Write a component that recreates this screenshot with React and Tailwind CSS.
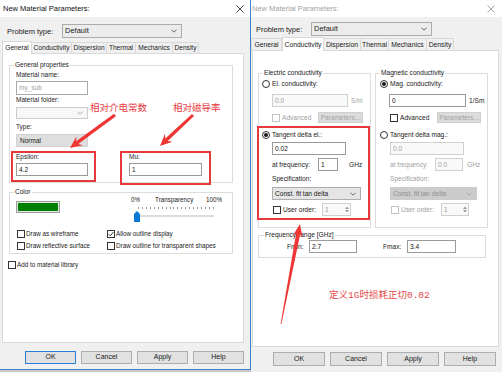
import React from "react";

const RED = "#e5393c";

function arrowPoints(tx, ty, px, py, w0, w1, headLen, headW) {
  const dx = px - tx, dy = py - ty;
  const L = Math.hypot(dx, dy);
  const ux = dx / L, uy = dy / L;
  const nx = -uy, ny = ux;
  const bx = px - ux * headLen, by = py - uy * headLen;
  const bx2 = px - ux * (headLen - 3), by2 = py - uy * (headLen - 3);
  const pts = [
    [tx + (nx * w0) / 2, ty + (ny * w0) / 2],
    [bx2 + (nx * w1) / 2, by2 + (ny * w1) / 2],
    [bx + (nx * headW) / 2, by + (ny * headW) / 2],
    [px, py],
    [bx - (nx * headW) / 2, by - (ny * headW) / 2],
    [bx2 - (nx * w1) / 2, by2 - (ny * w1) / 2],
    [tx - (nx * w0) / 2, ty - (ny * w0) / 2],
  ];
  return pts.map((p) => p.map((v) => v.toFixed(1)).join(",")).join(" ");
}

const CloseX = ({ color }) => (
  <svg width="8" height="8" viewBox="0 0 8 8">
    <path d="M0.5 0.5 L7.5 7.5 M7.5 0.5 L0.5 7.5" stroke={color} strokeWidth="0.9" />
  </svg>
);

const Chevron = ({ color }) => (
  <svg width="6" height="4" viewBox="0 0 6 4">
    <path d="M0.5 0.7 L3 3.2 L5.5 0.7" fill="none" stroke={color} strokeWidth="0.8" />
  </svg>
);

function Check({ checked = false, disabled = false }) {
  return (
    <span
      className={
        disabled
          ? "w-[8px] h-[8px] shrink-0 border border-[#c4c4c4] bg-white flex items-center justify-center"
          : "w-[8px] h-[8px] shrink-0 border border-[#333333] bg-white flex items-center justify-center"
      }
    >
      {checked && (
        <svg width="6" height="6" viewBox="0 0 6 6">
          <path d="M0.6 3.1 L2.3 4.8 L5.4 1.1" fill="none" stroke="#222" strokeWidth="0.9" />
        </svg>
      )}
    </span>
  );
}

function Radio({ checked = false }) {
  return (
    <span className="w-[8px] h-[8px] shrink-0 rounded-full border border-[#333333] bg-white flex items-center justify-center">
      {checked && <span className="w-[4px] h-[4px] rounded-full bg-[#1a1a1a]" />}
    </span>
  );
}

function Field({ className = "", disabled = false, children }) {
  return (
    <div
      className={
        (disabled
          ? "h-[13px] border border-[#cfcfcf] bg-[#f9f9f9] text-[#a0a0a0] flex items-center pl-[2px] shrink-0 "
          : "h-[13px] border border-[#9a9a9a] bg-white text-[#111111] flex items-center pl-[2px] shrink-0 ") + className
      }
    >
      {children}
    </div>
  );
}

function Combo({ className = "", text, disabled = false }) {
  return (
    <div className={"border flex items-center justify-between shrink-0 " + className}>
      <span className="pl-[2px]">{text}</span>
      <span className="pr-[4px] flex items-center">
        <Chevron color={disabled ? "#9a9a9a" : "#444444"} />
      </span>
    </div>
  );
}

function Spin({ className = "" }) {
  return (
    <div className={"h-[13px] border border-[#cfcfcf] bg-[#f9f9f9] text-[#a0a0a0] flex items-center justify-between pl-[2px] shrink-0 " + className}>
      <span>1</span>
      <span className="flex flex-col items-center justify-center w-[7px] h-full gap-[1px]">
        <svg width="4" height="3" viewBox="0 0 4 3">
          <path d="M0 3 L2 0.5 L4 3 Z" fill="#9a9a9a" />
        </svg>
        <svg width="4" height="3" viewBox="0 0 4 3">
          <path d="M0 0 L2 2.5 L4 0 Z" fill="#9a9a9a" />
        </svg>
      </span>
    </div>
  );
}

function CheckRow({ label, checked = false }) {
  return (
    <div className="flex items-center h-[9px] gap-[1px]">
      <Check checked={checked} />
      <span className="text-[6.3px] leading-[8px] whitespace-nowrap">{label}</span>
    </div>
  );
}

function Tab({ w, sel = false, h, label }) {
  return (
    <div
      className={
        sel
          ? "relative z-10 -mb-px bg-white border border-b-0 border-[#d9d9d9] flex items-center justify-center whitespace-nowrap shrink-0 " + w + " " + h
          : "-ml-px first:ml-0 bg-[#f0f0f0] border border-b-0 border-[#d9d9d9] flex items-center justify-center whitespace-nowrap shrink-0 " + w + " " + h
      }
    >
      {label}
    </div>
  );
}

function Button({ children, primary = false }) {
  return (
    <div
      className={
        primary
          ? "w-[51px] h-[13px] border border-[#2a7fd4] bg-[#e1e1e1] flex items-center justify-center text-[7px]"
          : "w-[51px] h-[13px] border border-[#adadad] bg-[#e1e1e1] flex items-center justify-center text-[7px]"
      }
    >
      {children}
    </div>
  );
}

function ButtonR({ children }) {
  return (
    <div className="w-[52px] h-[14px] border border-[#adadad] bg-[#e1e1e1] flex items-center justify-center text-[7px]">
      {children}
    </div>
  );
}

function LeftWindow() {
  return (
    <div className="w-[251px] h-[372px] flex flex-col shrink-0">
      <div className="w-[251px] h-[370px] bg-[#f0f0f0] border-r border-b border-[#3f82c8] flex flex-col">
        <div className="h-[17px] shrink-0 bg-white flex items-center justify-between pl-[3px] pr-[6px]">
          <span className="text-[7.5px] leading-[9px] text-[#111111]">New Material Parameters:</span>
          <CloseX color="#333333" />
        </div>
        <div className="flex items-center h-[14px] mt-[7px] shrink-0">
          <span className="w-[62px] pl-[7px] text-[7.5px] leading-[9px]">Problem type:</span>
          <Combo className="w-[120px] h-[14px] bg-[#ececec] border-[#acacac] text-[7.5px]" text="Default" />
        </div>
        <div className="flex items-end h-[12px] mt-[3px] pl-[2px] text-[6.6px] leading-[8px] shrink-0">
          <Tab w="w-[30px]" h="h-[13px]" sel label="General" />
          <Tab w="w-[41px]" h="h-[11px]" label="Conductivity" />
          <Tab w="w-[36px]" h="h-[11px]" label="Dispersion" />
          <Tab w="w-[30px]" h="h-[11px]" label="Thermal" />
          <Tab w="w-[38px]" h="h-[11px]" label="Mechanics" />
          <Tab w="w-[27px]" h="h-[11px]" label="Density" />
        </div>
        <div className="ml-[2px] w-[242px] h-[290px] shrink-0 bg-white border border-[#d9d9d9] flex flex-col text-[6.5px] leading-[8px]">
          <fieldset className="ml-[6px] mt-[7px] w-[224px] h-[122px] shrink-0 border border-[#dcdcdc] pl-[1px]">
            <legend className="ml-[3px] px-[1px]">General properties</legend>
            <div className="ml-[5px] mt-[2px]">Material name:</div>
            <div className="ml-[5px] mt-[2px] w-[72px] h-[14px] border border-[#a8a8a8] bg-white flex items-center pl-[2px] text-[#a0a0a0]">
              my_sub
            </div>
            <div className="flex items-start">
              <div className="flex flex-col ml-[5px]">
                <div className="mt-[1px]">Material folder:</div>
                <Combo className="mt-[3px] w-[72px] h-[12px] bg-[#f7f7f7] border-[#cccccc]" text="" disabled />
              </div>
              <span className="ml-[2px] mt-[6px] text-[9.5px] leading-[12px] text-[#e8383d] whitespace-nowrap font-['Noto_Sans_CJK_SC',sans-serif]">
                相对介电常数
              </span>
              <span className="ml-[26px] mt-[6px] text-[9.5px] leading-[12px] text-[#e8383d] whitespace-nowrap font-['Noto_Sans_CJK_SC',sans-serif]">
                相对磁导率
              </span>
            </div>
            <div className="ml-[5px] mt-[4px]">Type:</div>
            <div className="ml-[5px] mt-[3px] w-[72px] h-[13px] bg-[#dedede] border border-[#d2d2d2] flex items-center pl-[3px]">
              Normal
            </div>
            <div className="flex items-start mt-[4px]">
              <div className="w-[85px] h-[31px] shrink-0 border-2 border-[#e5393c] pl-[3px]">
                <div>Epsilon:</div>
                <Field className="mt-[2px] w-[72px]">4.2</Field>
              </div>
              <div className="ml-[24px] w-[91px] h-[34px] shrink-0 border-2 border-[#e5393c] pl-[7px]">
                <div>Mu:</div>
                <Field className="mt-[2px] w-[73px]">1</Field>
              </div>
            </div>
          </fieldset>
          <fieldset className="ml-[6px] mt-[5px] w-[224px] h-[66px] shrink-0 border border-[#dcdcdc] pl-[1px]">
            <legend className="ml-[3px] px-[1px]">Color</legend>
            <div className="flex items-start">
              <div className="ml-[5px] mt-[5px] w-[44px] h-[12px] shrink-0 border border-[#9c9c9c] bg-[#e6e6e6] p-[1px]">
                <div className="w-full h-full bg-[#008000]" />
              </div>
              <div className="ml-[70px] w-[92px] flex flex-col">
                <div className="flex h-[8px] text-[6.3px] whitespace-nowrap">
                  <span className="ml-[1px]">0%</span>
                  <span className="ml-[15px]">Transparency</span>
                  <span className="ml-auto">100%</span>
                </div>
                <div className="ml-[8px] mt-[3px] w-[76px] h-[2px] flex justify-between">
                  {Array.from({ length: 20 }).map((_, i) => (
                    <span key={i} className="w-[1px] h-[2px] bg-[#9a9a9a]" />
                  ))}
                </div>
                <div className="relative mt-[2px] h-[11px]">
                  <div className="absolute left-[7px] top-[4px] w-[77px] h-[2px] bg-[#dcdcdc]" />
                  <svg className="absolute left-[4px] top-0" width="6" height="11" viewBox="0 0 6 11">
                    <path d="M0 3 L3 0 L6 3 V11 H0 Z" fill="#0a78d7" />
                  </svg>
                </div>
              </div>
            </div>
            <div className="grid grid-cols-[90px_1fr] gap-y-[3px] mt-[7px] ml-[6px]">
              <CheckRow label="Draw as wireframe" />
              <CheckRow checked label="Allow outline display" />
              <CheckRow label="Draw reflective surface" />
              <CheckRow label="Draw outline for transparent shapes" />
            </div>
          </fieldset>
          <div className="ml-[5px] mt-[6px]">
            <CheckRow label="Add to material library" />
          </div>
        </div>
        <div className="flex justify-end gap-[5px] pr-[6px] mt-[8px]">
          <Button primary>OK</Button>
          <Button>Cancel</Button>
          <Button>Apply</Button>
          <Button>Help</Button>
        </div>
      </div>
      <div className="h-[2px] bg-[#c9c9c9]" />
    </div>
  );
}

function RightWindow() {
  return (
    <div className="w-[251px] h-[372px] shrink-0 bg-[#f0f0f0] flex flex-col">
      <div className="h-[17px] shrink-0 bg-white flex items-center justify-between pl-[1px] pr-[7px]">
        <span className="text-[7.5px] leading-[9px] text-[#a3a3a3]">New Material Parameters:</span>
        <CloseX color="#9a9a9a" />
      </div>
      <div className="flex items-center h-[14px] mt-[5px] shrink-0">
        <span className="w-[60px] pl-[5px] text-[7.5px] leading-[9px]">Problem type:</span>
        <Combo className="w-[121px] h-[14px] bg-[#ececec] border-[#acacac] text-[7.5px]" text="Default" />
      </div>
      <div className="flex items-end h-[13px] mt-[1px] text-[6.8px] leading-[8px] shrink-0">
        <Tab w="w-[31px]" h="h-[12px]" label="General" />
        <Tab w="w-[42px]" h="h-[14px]" sel label="Conductivity" />
        <Tab w="w-[38px]" h="h-[12px]" label="Dispersion" />
        <Tab w="w-[29px]" h="h-[12px]" label="Thermal" />
        <Tab w="w-[39px]" h="h-[12px]" label="Mechanics" />
        <Tab w="w-[28px]" h="h-[12px]" label="Density" />
      </div>
      <div className="ml-[1px] w-[247px] h-[297px] shrink-0 bg-white border border-[#d9d9d9] flex flex-col text-[6.6px] leading-[8px]">
        <div className="flex items-start mt-[18px]">
          <fieldset className="ml-[5px] w-[111px] h-[159px] shrink-0 border border-[#dcdcdc]">
            <legend className="ml-[4px] px-[1px]">Electric conductivity</legend>
            <div className="flex items-center h-[8px] mt-[3px] ml-[3px] gap-[2px]">
              <Radio />
              <span>El. conductivity:</span>
            </div>
            <div className="flex items-center mt-[6px] ml-[13px]">
              <Field disabled className="w-[76px]">0.0</Field>
              <span className="ml-[3px] text-[#a0a0a0]">S/m</span>
            </div>
            <div className="flex items-center h-[11px] mt-[5px] ml-[13px]">
              <Check disabled />
              <span className="ml-[2px] w-[36px] text-[#a0a0a0]">Advanced</span>
              <div className="w-[45px] h-[11px] bg-[#dcdcdc] border border-[#d0d0d0] flex items-center justify-center text-[#a3a3a3]">
                Parameters...
              </div>
            </div>
            <div className="-ml-[2px] mt-[3px] w-[113px] h-[94px] border-2 border-[#e5393c] flex flex-col">
              <div className="flex items-center h-[8px] mt-[3px] ml-[3px] gap-[2px]">
                <Radio checked />
                <span>Tangent delta el.:</span>
              </div>
              <Field className="mt-[3px] ml-[13px] w-[74px]">0.02</Field>
              <div className="flex items-center h-[13px] mt-[3px] ml-[13px]">
                <span className="w-[46px]">at frequency:</span>
                <Field className="w-[20px]">1</Field>
                <span className="ml-[11px]">GHz</span>
              </div>
              <div className="mt-[4px] ml-[13px] h-[8px]">Specification:</div>
              <Combo className="mt-[4px] ml-[13px] w-[89px] h-[13px] bg-[#e5e5e5] border-[#adadad]" text="Const. fit tan delta" />
              <div className="flex items-center h-[13px] mt-[3px] ml-[14px]">
                <Check />
                <span className="ml-[2px] w-[39px]">User order:</span>
                <Spin className="w-[29px]" />
              </div>
            </div>
          </fieldset>
          <fieldset className="ml-[4px] w-[113px] h-[159px] shrink-0 border border-[#dcdcdc]">
            <legend className="ml-[4px] px-[1px]">Magnetic conductivity</legend>
            <div className="flex items-center h-[8px] mt-[3px] ml-[4px] gap-[2px]">
              <Radio checked />
              <span>Mag. conductivity:</span>
            </div>
            <div className="flex items-center mt-[6px] ml-[13px]">
              <Field className="w-[77px]">0</Field>
              <span className="ml-[3px]">1/Sm</span>
            </div>
            <div className="flex items-center h-[11px] mt-[5px] ml-[14px]">
              <Check />
              <span className="ml-[2px] w-[37px]">Advanced</span>
              <div className="w-[44px] h-[11px] bg-[#dcdcdc] border border-[#d0d0d0] flex items-center justify-center text-[#a3a3a3]">
                Parameters...
              </div>
            </div>
            <div className="flex items-center h-[8px] mt-[8px] ml-[4px] gap-[2px]">
              <Radio />
              <span>Tangent delta mag.:</span>
            </div>
            <Field disabled className="mt-[3px] ml-[14px] w-[74px]">0.0</Field>
            <div className="flex items-center h-[13px] mt-[3px] ml-[14px] text-[#a0a0a0]">
              <span className="w-[45px]">at frequency:</span>
              <Field disabled className="w-[28px]">0.0</Field>
              <span className="ml-[4px]">GHz</span>
            </div>
            <div className="mt-[4px] ml-[14px] h-[8px] text-[#a0a0a0]">Specification:</div>
            <Combo
              className="mt-[4px] ml-[14px] w-[87px] h-[13px] bg-[#cccccc] border-[#cccccc] text-[#8f8f8f]"
              text="Const. fit tan delta"
              disabled
            />
            <div className="flex items-center h-[13px] mt-[3px] ml-[15px] text-[#a0a0a0]">
              <Check disabled />
              <span className="ml-[2px] w-[40px]">User order:</span>
              <Spin className="w-[28px]" />
            </div>
          </fieldset>
        </div>
        <fieldset className="ml-[5px] mt-[3px] w-[228px] h-[27px] shrink-0 border border-[#dcdcdc]">
          <legend className="ml-[5px] px-[1px]">Frequency range [GHz]</legend>
          <div className="flex items-center h-[13px] mt-[1px]">
            <span className="ml-[28px] w-[22px]">Fmin:</span>
            <Field className="w-[48px]">2.7</Field>
            <span className="ml-[26px] w-[24px]">Fmax:</span>
            <Field className="w-[49px]">3.4</Field>
          </div>
        </fieldset>
        <div className="ml-[76px] mt-[30px] h-[12px] text-[9.5px] leading-[12px] text-[#e8464a] whitespace-nowrap font-['Noto_Sans_CJK_SC',sans-serif]">
          定义<span className="font-['Liberation_Mono','Noto_Sans_CJK_SC',monospace]">1G</span>时损耗正切
          <span className="font-['Liberation_Mono','Noto_Sans_CJK_SC',monospace]">0.02</span>
        </div>
      </div>
      <div className="flex justify-end gap-[5px] pr-[6px] mt-[5px]">
        <ButtonR>OK</ButtonR>
        <ButtonR>Cancel</ButtonR>
        <ButtonR>Apply</ButtonR>
        <ButtonR>Help</ButtonR>
      </div>
    </div>
  );
}

function Arrows() {
  return (
    <svg className="absolute left-0 top-0 pointer-events-none" width="502" height="372" viewBox="0 0 502 372">
      <polygon points={arrowPoints(115, 115, 70, 148, 3, 3.6, 12, 11)} fill="#f03535" />
      <polygon points={arrowPoints(193, 115, 160, 146, 3, 3.6, 12, 11)} fill="#f03535" />
      <polygon points={arrowPoints(281, 324, 300, 224, 0.8, 4.2, 13, 10)} fill="#f03535" />
    </svg>
  );
}

export default function App() {
  return (
    <div className="relative w-[502px] h-[372px] overflow-hidden flex bg-[#e9e9e9] font-['Liberation_Sans','Noto_Sans_CJK_SC',sans-serif] text-[#1a1a1a]">
      <LeftWindow />
      <RightWindow />
      <Arrows />
    </div>
  );
}
